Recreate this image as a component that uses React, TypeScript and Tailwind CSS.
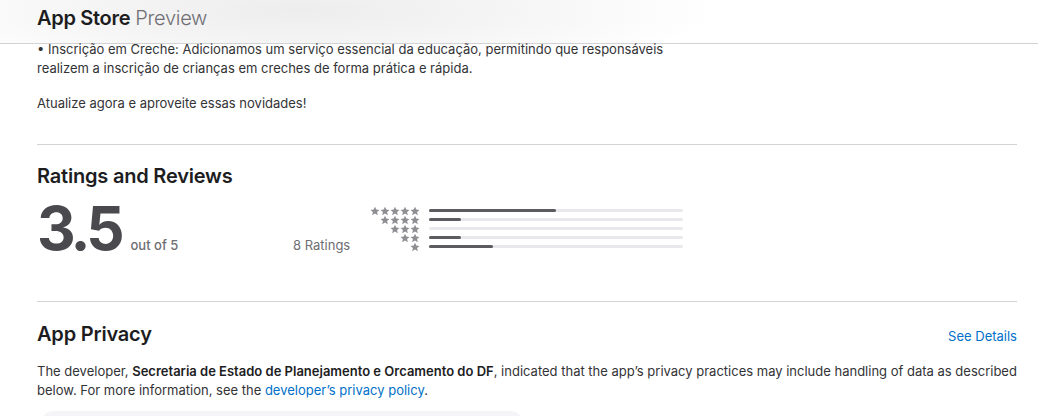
import React from 'react';

const ratings = [
  { stars: 5, count: 4 },
  { stars: 4, count: 1 },
  { stars: 3, count: 0 },
  { stars: 2, count: 1 },
  { stars: 1, count: 2 },
];
const total = 8;

const Star = () => (
  <svg width="10" height="10" viewBox="0 0 24 24" className="fill-[#8e8e93]">
    <path d="M12 1.5l3.1 7.1 7.7.7-5.8 5.1 1.7 7.6L12 18l-6.7 4 1.7-7.6-5.8-5.1 7.7-.7z" />
  </svg>
);

export default function App() {
  return (
    <div className="min-h-screen bg-white font-['Inter','Liberation_Sans',sans-serif] text-[#333336]">
      {/* header */}
      <header className="h-[44px] border-b border-[#d2d2d7] bg-[radial-gradient(ellipse_420px_70px_at_300px_10px,#ededed_0%,#f4f4f4_45%,#ffffff_100%)]">
        <div className="flex items-center px-[37px] pt-[6px] text-[20px] leading-[24px] tracking-[-0.3px]">
          <span className="font-semibold text-[#1d1d1f]">App Store</span>
          <span className="ml-[5px] font-light text-[#6e6e73]">Preview</span>
        </div>
      </header>

      <main className="-mt-[4px] px-[37px]">
        {/* what's new */}
        <section className="w-[640px] text-[13px] leading-[19px]">
          <p>• Inscrição em Creche: Adicionamos um serviço essencial da educação, permitindo que responsáveis realizem a inscrição de crianças em creches de forma prática e rápida.</p>
          <p className="mt-[16px]">Atualize agora e aproveite essas novidades!</p>
        </section>

        <div className="mt-[31px] w-[980px] border-t border-[#d2d2d7]" />

        {/* ratings */}
        <section className="w-[980px] pt-[19px] pb-[45px]">
          <h2 className="text-[20px] font-semibold leading-[24px] tracking-[-0.2px] text-[#1d1d1f]">Ratings and Reviews</h2>
          <div className="mt-[12px] flex items-end">
            <div className="flex w-[256px] items-baseline">
              <span className="text-[60px] font-bold leading-[56px] tracking-[-4px] text-[#4a4a4e]">3.5</span>
              <span className="ml-[10px] text-[13px] font-medium text-[#6e6e73]">out of 5</span>
            </div>
            <div className="w-[77px] whitespace-nowrap pb-[1px] text-[13px] text-[#6e6e73]">8 Ratings</div>
            <div className="mb-[5px] flex flex-col">
              {ratings.map((r) => (
                <div key={r.stars} className="flex h-[9px] items-center">
                  <div className="flex w-[50px] justify-end">
                    {Array.from({ length: r.stars }).map((_, i) => (
                      <Star key={i} />
                    ))}
                  </div>
                  <div className="ml-[9px] h-[3px] w-[254px] rounded-full bg-[#e8e8ed]">
                    <div
                      className="h-full rounded-full bg-[#5c5c60]"
                      style={{ width: `${(r.count / total) * 100}%` }}
                    />
                  </div>
                </div>
              ))}
            </div>
          </div>
        </section>

        <div className="w-[980px] border-t border-[#d2d2d7]" />

        {/* privacy */}
        <section className="w-[980px] pt-[20px]">
          <div className="flex items-baseline justify-between">
            <h2 className="text-[20px] font-semibold leading-[24px] tracking-[-0.2px] text-[#1d1d1f]">App Privacy</h2>
            <a href="#" className="text-[13px] text-[#0070c9]">See Details</a>
          </div>
          <p className="mt-[15px] text-[13px] leading-[19px]">
            The developer, <span className="font-semibold text-[#1d1d1f]">Secretaria de Estado de Planejamento e Orcamento do DF</span>, indicated that the app’s privacy practices may include handling of data as described below. For more information, see the{' '}
            <a href="#" className="text-[#0070c9]">developer’s privacy policy</a>.
          </p>
          <div className="mt-[11px] ml-[3px] h-[40px] w-[484px] rounded-t-[14px] bg-[#f5f5f7]" />
        </section>
      </main>
    </div>
  );
}
